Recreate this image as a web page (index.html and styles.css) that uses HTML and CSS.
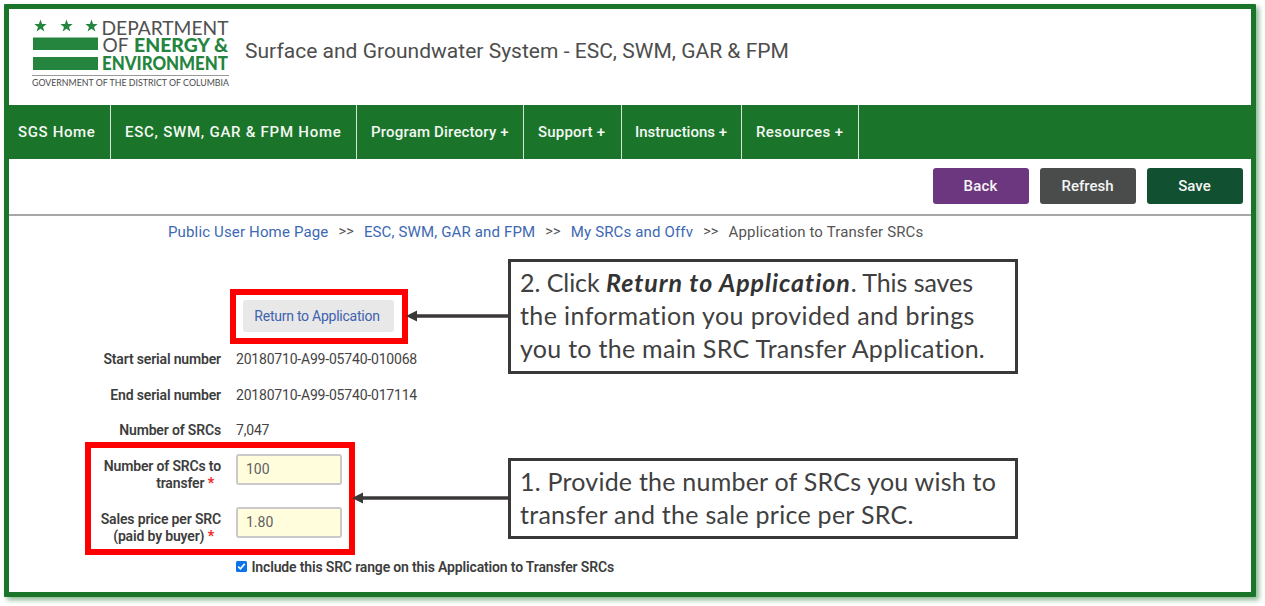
FILE: index.html
```html
<!DOCTYPE html>
<html lang="en">
<head>
<meta charset="utf-8">
<title>Application to Transfer SRCs</title>
<link rel="stylesheet" href="styles.css">
</head>
<body>
<div class="frame">
  <header class="header">
    <svg class="logo" width="200" height="72" viewBox="0 0 200 72" role="img" aria-label="Department of Energy &amp; Environment">
      <defs><path id="star" d="M0-6.500 1.600-2 6.200-1.900 2.500.9 3.900 5.400 0 2.700-3.900 5.400-2.500.9-6.200-1.900-1.600-2Z"/></defs>
      <g fill="#25853f">
        <use href="#star" x="8.500" y="8"/><use href="#star" x="34.500" y="8"/><use href="#star" x="59.500" y="8"/>
        <rect x="1" y="19.500" width="65" height="12.500"/>
        <rect x="1" y="39" width="65" height="13"/>
      </g>
      <g class="logo-text">
        <text x="69.500" y="16.500" textLength="127" lengthAdjust="spacingAndGlyphs">DEPARTMENT</text>
        <text x="70.500" y="34" textLength="26" lengthAdjust="spacingAndGlyphs">OF</text>
        <text class="strong" x="102" y="34" textLength="94" lengthAdjust="spacingAndGlyphs">ENERGY &amp;</text>
        <text class="strong" x="70" y="52" textLength="126" lengthAdjust="spacingAndGlyphs">ENVIRONMENT</text>
      </g>
      <rect x="0" y="57" width="197" height="1" fill="#999"/>
      <text class="logo-sub" x="0" y="68" textLength="197" lengthAdjust="spacingAndGlyphs">GOVERNMENT OF THE DISTRICT OF COLUMBIA</text>
    </svg>
    <h1 class="title">Surface and Groundwater System - ESC, SWM, GAR &amp; FPM</h1>
  </header>

  <nav class="nav">
    <a class="nav-sgs">SGS Home</a>
    <a class="nav-esc">ESC, SWM, GAR &amp; FPM Home</a>
    <a class="nav-dir">Program Directory +</a>
    <a class="nav-sup">Support +</a>
    <a class="nav-ins">Instructions +</a>
    <a class="nav-res">Resources +</a>
  </nav>

  <div class="toolbar">
    <button class="btn back">Back</button>
    <button class="btn refresh">Refresh</button>
    <button class="btn save">Save</button>
  </div>

  <div class="crumbs">
    <a>Public User Home Page</a><i>&gt;&gt;</i><a>ESC, SWM, GAR and FPM</a><i>&gt;&gt;</i><a>My SRCs and Offv</a><i>&gt;&gt;</i><span>Application to Transfer SRCs</span>
  </div>

  <form class="form">
    <a class="return">Return to Application</a>
    <div class="row"><label>Start serial number</label><span>20180710-A99-05740-010068</span></div>
    <div class="row"><label>End serial number</label><span>20180710-A99-05740-017114</span></div>
    <div class="row"><label>Number of SRCs</label><span>7,047</span></div>
    <div class="row tall"><label>Number of SRCs to<br>transfer <b>*</b></label><input type="text" value="100"></div>
    <div class="row tall"><label>Sales price per SRC<br>(paid by buyer) <b>*</b></label><input type="text" value="1.80"></div>
    <div class="check">
      <svg width="11" height="11" viewBox="0 0 11 11"><rect width="11" height="11" rx="1.500" fill="#0b72e8"/><path d="M2.200 5.700 4.400 7.800 8.700 2.900" fill="none" stroke="#fff" stroke-width="1.600"/></svg>
      <span>Include this SRC range on this Application to Transfer SRCs</span>
    </div>
  </form>
</div>

<div class="highlight hl-return"></div>
<div class="highlight hl-fields"></div>
<svg class="arrow arrow-return" width="102" height="12" viewBox="0 0 102 12"><path d="M9 6H102" stroke="#3b3838" stroke-width="3.500"/><path d="M0 6 11 .5V11.500Z" fill="#3b3838"/></svg>
<svg class="arrow arrow-fields" width="156" height="12" viewBox="0 0 156 12"><path d="M9 6H156" stroke="#3b3838" stroke-width="3.500"/><path d="M0 6 11 .5V11.500Z" fill="#3b3838"/></svg>
<div class="callout co-return">
  <p class="l1">2. Click <em>Return to Application</em>. This saves</p>
  <p class="l2">the information you provided and brings</p>
  <p class="l3">you to the main SRC Transfer Application.</p>
</div>
<div class="callout co-fields">
  <p class="l4">1. Provide the number of SRCs you wish to</p>
  <p class="l5">transfer and the sale price per SRC.</p>
</div>
</body>
</html>
```
FILE: styles.css
```css
* { box-sizing: border-box; }
body { margin: 0; height: 606px; padding: 4px; background: #fff; font-family: Roboto, "Liberation Sans", sans-serif; color: #444; overflow: hidden; position: relative; }
.frame { width: 1252px; height: 593px; border: 5px solid #1a7429; border-radius: 1px; background: #fff; box-shadow: 3px 3px 5px rgba(26, 116, 41, .5); }

.header { height: 96px; display: flex; align-items: flex-start; padding: 9px 0 0 23px; }
.logo { display: block; flex: none; overflow: visible; }
.logo-text { font: 400 19.5px Lato, sans-serif; fill: #505050; }
.logo-text .strong { font-weight: 900; fill: #25853f; font-size: 19px; }
.logo-sub { font: 400 9px Lato, sans-serif; fill: #4a4a4a; }
.title { margin: 19px 0 0 13px; font-size: 21px; line-height: 28px; font-weight: 400; color: #4d4d4d; white-space: nowrap; letter-spacing: .02px; }

.nav { height: 54px; background: #1a7429; display: flex; }
.nav a { height: 54px; line-height: 54px; padding-left: 14px; border-right: 1px solid #d5e6d8; color: #f3f8f3; font-size: 15px; font-weight: 500; white-space: nowrap; }
.nav .nav-sgs { width: 102px; padding-left: 9px; letter-spacing: .63px; }
.nav-esc { width: 246px; letter-spacing: .75px; }
.nav-dir { width: 167px; letter-spacing: .18px; }
.nav-sup { width: 98px; letter-spacing: .18px; }
.nav .nav-ins { width: 120px; padding-left: 13px; letter-spacing: -.02px; }
.nav-res { width: 117px; letter-spacing: .42px; }

.toolbar { height: 57px; border-bottom: 2px solid #a6a6a6; display: flex; justify-content: flex-end; gap: 11px; padding: 9px 8.500px 0 0; }
.btn { width: 96px; height: 36px; border: 0; border-radius: 3px; padding: 0; color: #f5f5f5; font: 500 15px Roboto, sans-serif; }
.back { background: #6c377f; letter-spacing: .2px; }
.refresh { background: #4a4c4c; }
.save { background: #115030; }

.crumbs { height: 32px; line-height: 32px; padding-left: 159px; display: flex; font-size: 15px; white-space: nowrap; color: #555; letter-spacing: .15px; }
.crumbs a { color: #3d68b2; }
.crumbs i { font-style: normal; font-size: 14.5px; padding: 0 10px; }

.form { display: flex; flex-direction: column; font-size: 14px; letter-spacing: -.16px; }
.return { width: 151px; height: 32px; margin: 52px 0 0 234px; border-radius: 3px; background: #e8e8e8; color: #3d62ae; line-height: 32px; padding-right: 3px; text-align: center; white-space: nowrap; letter-spacing: -.25px; }
.return + .row { margin-top: 10px; }
.row { display: grid; grid-template-columns: 212px 200px; column-gap: 15px; height: 35.5px; line-height: 35.5px; }
.row label { text-align: right; font-weight: 600; color: #3d3d3d; white-space: nowrap; }
.row span { white-space: nowrap; letter-spacing: -.2px; }
.row b { color: #f03030; margin-right: 7px; }
.tall { height: 53px; line-height: 17px; padding-top: 5px; }
.tall label { padding-top: 4px; }
.row input { width: 106px; height: 31px; border: 2px solid #c9c9c9; border-radius: 3px; background: #fffddc; padding: 0 8px 1px; color: #606060; font: 14px Roboto, sans-serif; }
.check { display: flex; align-items: center; gap: 4.5px; height: 20px; margin: 2px 0 0 227px; font-weight: 600; color: #3d3d3d; white-space: nowrap; }

/* Instruction overlays on top of the form */
.highlight { position: absolute; border: 6px solid #fe0000; }
.hl-return { left: 230px; top: 289px; width: 178px; height: 55px; }
.hl-fields { left: 85px; top: 442px; width: 270px; height: 113px; }
.arrow { position: absolute; }
.arrow-return { left: 406px; top: 310px; }
.arrow-fields { left: 352px; top: 492px; }
.callout { position: absolute; left: 508px; width: 510px; border: 3px solid #3b3838; background: #fff; padding: 4px 0 0 9px; font: 25px/33px Lato, Carlito, sans-serif; color: #404040; white-space: nowrap; }
.callout p { margin: 0; }
.callout em { font-weight: 700; color: #333; letter-spacing: .95px; }
.co-return { top: 259px; height: 115px; }
.co-fields { top: 458px; height: 81px; }
.l1 { letter-spacing: -.05px; }
.l2 { letter-spacing: .4px; }
.l3 { letter-spacing: .28px; }
.l4 { letter-spacing: .22px; }
.l5 { letter-spacing: .27px; }
```
